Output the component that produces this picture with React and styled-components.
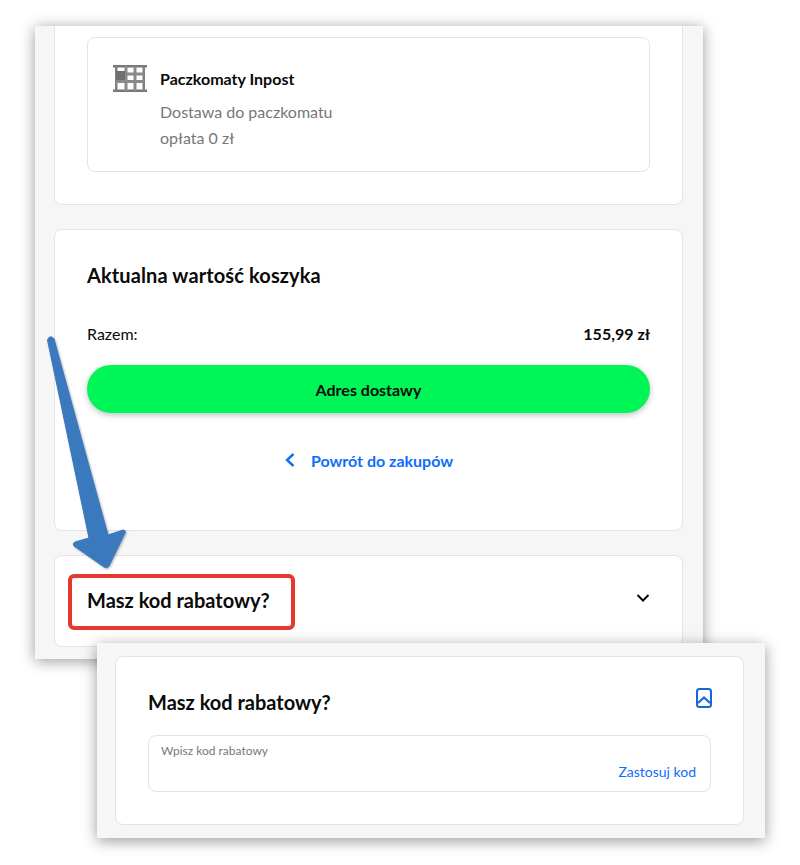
import React from 'react';
import styled, { createGlobalStyle } from 'styled-components';

const GlobalStyle = createGlobalStyle`
    html, body {
        margin: 0;
        padding: 0;
        background: #ffffff;
        font-family: 'Lato', 'Liberation Sans', sans-serif;
    }
    * {
        box-sizing: border-box;
    }
`

function LockerIcon() {
    return (
        <svg width="34" height="27" viewBox="0 0 34 27" fill="none">
            <rect x="0" y="0" width="34" height="2.5" fill="#777" />
            <rect x="0" y="24.5" width="34" height="2.5" fill="#777" />
            <rect x="2" y="1" width="2.5" height="25" fill="#808080" />
            <rect x="29.5" y="1" width="2.5" height="25" fill="#808080" />
            <rect x="11.5" y="1" width="3" height="25" fill="#8a8a8a" />
            <rect x="20.5" y="1" width="3" height="25" fill="#8a8a8a" />
            <rect x="3" y="7.5" width="28" height="3" fill="#8a8a8a" />
            <rect x="3" y="15" width="28" height="3" fill="#8a8a8a" />
            <rect x="3" y="6" width="9" height="9" fill="#707070" />
        </svg>
    )
}

function ArrowShape() {
    return (
        <svg width="90" height="240" viewBox="0 0 90 240">
            <path
                d="M0.5 5 Q3 -1 7 4 L61 200 L76 195 Q79 195 78 198 L62 231 Q60 234 57 232 L27 211 Q25 208 28 207 L42 203 Z"
                fill="#3b79bf"
                stroke="#3b79bf"
                strokeWidth="1"
                strokeLinejoin="round"
            />
        </svg>
    )
}

export default function App() {
    return (
        <Page>
            <GlobalStyle />
            <CartWindow>
                <DeliveryCard>
                    <OptionBox>
                        <LockerIcon />
                        <OptionText>
                            <OptionName>Paczkomaty Inpost</OptionName>
                            <OptionNote>Dostawa do paczkomatu</OptionNote>
                            <OptionNote>opłata 0 zł</OptionNote>
                        </OptionText>
                    </OptionBox>
                </DeliveryCard>
                <SummaryCard>
                    <SummaryTitle>Aktualna wartość koszyka</SummaryTitle>
                    <TotalRow>
                        <span>Razem:</span>
                        <strong>155,99 zł</strong>
                    </TotalRow>
                    <PrimaryButton>Adres dostawy</PrimaryButton>
                    <BackLink>
                        <svg width="12" height="16" viewBox="0 0 12 16" fill="none">
                            <path d="M9.5 2 L3 8 L9.5 14" stroke="#0d6efd" strokeWidth="2.4" />
                        </svg>
                        Powrót do zakupów
                    </BackLink>
                </SummaryCard>
                <CouponCard>
                    <SectionTitle>Masz kod rabatowy?</SectionTitle>
                    <svg width="14" height="10" viewBox="0 0 14 10" fill="none">
                        <path d="M1.5 2 L7 7.5 L12.5 2" stroke="#0a0a0a" strokeWidth="2" />
                    </svg>
                </CouponCard>
            </CartWindow>

            <ArrowMark><ArrowShape /></ArrowMark>
            <Highlight />

            <CouponWindow>
                <OpenCouponCard>
                    <OpenHeader>
                        <SectionTitle>Masz kod rabatowy?</SectionTitle>
                        <svg width="16" height="20" viewBox="0 0 16 20" fill="none">
                            <rect x="1" y="1" width="14" height="18" rx="2.5" stroke="#1468d8" strokeWidth="2" />
                            <path d="M2 15 L8 9.5 L14 15" stroke="#1468d8" strokeWidth="2.2" />
                        </svg>
                    </OpenHeader>
                    <CodeField>
                        <FieldLabel>Wpisz kod rabatowy</FieldLabel>
                        <ApplyLink>Zastosuj kod</ApplyLink>
                    </CodeField>
                </OpenCouponCard>
            </CouponWindow>
        </Page>
    )
}

const Page = styled.div`
    position: relative;
    width: 800px;
    height: 865px;
    overflow: hidden;
    background: #ffffff;
`

const CartWindow = styled.div`
    position: absolute;
    left: 35px;
    top: 26px;
    width: 668px;
    height: 633px;
    padding: 0 20px 0 19px;
    display: flex;
    flex-direction: column;
    gap: 24px;
    background: #f6f6f6;
    box-shadow: 0 2px 14px rgba(0, 0, 0, 0.4);
`

const Card = styled.div`
    background: #ffffff;
    border: 1px solid #e4e4e4;
    border-radius: 8px;
`

const DeliveryCard = styled(Card)`
    height: 179px;
    padding: 11px 32px 0;
    border-top: none;
    border-radius: 0 0 8px 8px;
`

const OptionBox = styled.div`
    height: 135px;
    padding: 27px 25px 0;
    display: flex;
    gap: 13px;
    border: 1px solid #e4e4e4;
    border-radius: 8px;
`

const OptionText = styled.div`
    display: flex;
    flex-direction: column;
`

const OptionName = styled.div`
    height: 35px;
    line-height: 30px;
    margin-top: -1px;
    font-size: 16px;
    font-weight: 700;
    color: #0a0a0a;
`

const OptionNote = styled.div`
    height: 26px;
    line-height: 26px;
    font-size: 16px;
    color: #777;
`

const SummaryCard = styled(Card)`
    height: 302px;
    padding: 31px 32px 0;
`

const SectionTitle = styled.h2`
    margin: 0;
    font-size: 20px;
    line-height: 28px;
    font-weight: 700;
    color: #0a0a0a;
`

const SummaryTitle = styled(SectionTitle)`
    letter-spacing: 0.12px;
`

const TotalRow = styled.div`
    margin-top: 35px;
    display: flex;
    justify-content: space-between;
    font-size: 16px;
    line-height: 20px;
    color: #0a0a0a;
    strong {
        font-weight: 700;
    }
`

const PrimaryButton = styled.div`
    margin-top: 21px;
    height: 48px;
    display: flex;
    align-items: center;
    justify-content: center;
    border-radius: 24px;
    background: #00f557;
    box-shadow: 0 2px 6px rgba(0, 0, 0, 0.25);
    font-size: 16px;
    font-weight: 700;
    color: #0a0a0a;
`

const BackLink = styled.div`
    margin-top: 35px;
    height: 24px;
    display: flex;
    align-items: center;
    justify-content: center;
    gap: 15px;
    font-size: 16px;
    font-weight: 700;
    color: #0d6efd;
`

const CouponCard = styled(Card)`
    height: 92px;
    padding: 30px 32px 0;
    display: flex;
    align-items: flex-start;
    justify-content: space-between;
    svg {
        margin: 7px 0 0;
    }
`

const ArrowMark = styled.div`
    position: absolute;
    left: 47px;
    top: 335px;
    width: 90px;
    height: 240px;
    filter: drop-shadow(1px 1px 1px rgba(0, 0, 0, 0.3));
`

const Highlight = styled.div`
    position: absolute;
    left: 68px;
    top: 574px;
    width: 227px;
    height: 56px;
    border: 4px solid #e5392f;
    border-radius: 6px;
`

const CouponWindow = styled.div`
    position: absolute;
    left: 97px;
    top: 643px;
    width: 668px;
    height: 195px;
    padding: 13px 21px 13px 18px;
    background: #f6f6f6;
    box-shadow: 0 3px 14px rgba(0, 0, 0, 0.4);
`

const OpenCouponCard = styled(Card)`
    height: 169px;
    padding: 31px 32px 0;
`

const OpenHeader = styled.div`
    display: flex;
    align-items: flex-start;
    justify-content: space-between;
    svg {
        margin: 0 -1px 0 0;
    }
`

const CodeField = styled.div`
    margin-top: 19px;
    height: 57px;
    padding: 7px 14px 0 12px;
    display: flex;
    flex-direction: column;
    border: 1px solid #e4e4e4;
    border-radius: 8px;
`

const FieldLabel = styled.div`
    font-size: 12px;
    line-height: 15px;
    color: #777;
`

const ApplyLink = styled.div`
    margin-top: 4px;
    text-align: right;
    font-size: 14px;
    line-height: 20px;
    color: #0d6efd;
`
